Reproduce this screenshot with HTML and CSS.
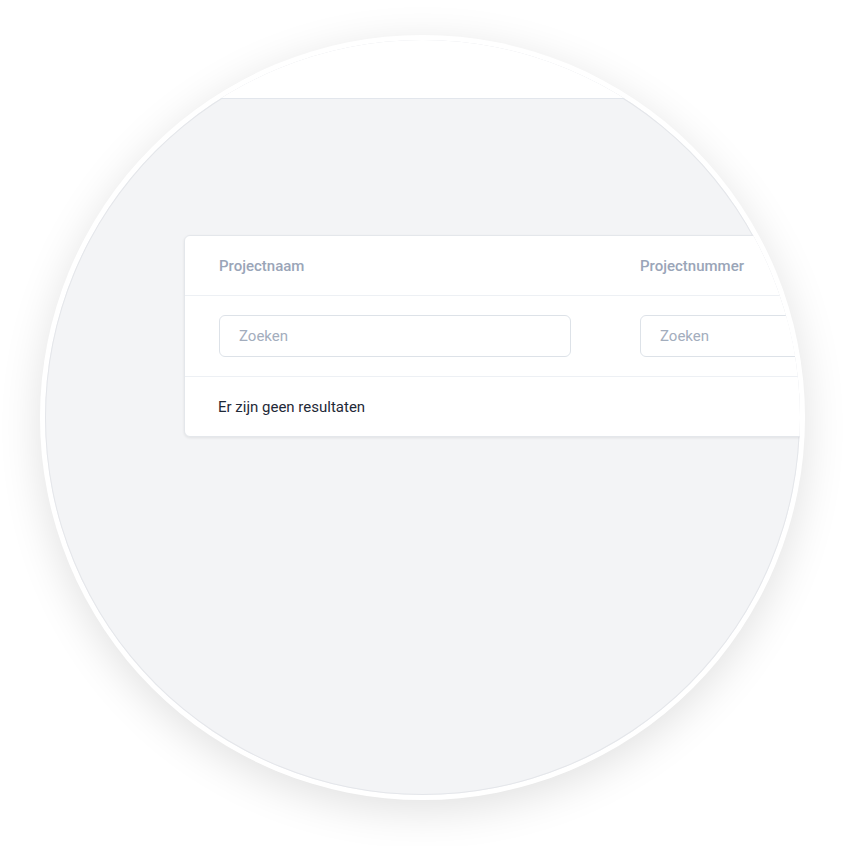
FILE: index.html
```html
<!DOCTYPE html>
<html lang="nl">
<head>
<meta charset="utf-8">
<title>Projecten</title>
<link rel="stylesheet" href="styles.css">
</head>
<body>
<div class="stage">
  <div class="lens">
    <div class="lens-inner">
      <div class="topbar"></div>
      <main class="page">
        <section class="card">
          <div class="row head">
            <div class="cell">Projectnaam</div>
            <div class="cell">Projectnummer</div>
          </div>
          <div class="row filters">
            <div class="cell"><input class="search" type="text" placeholder="Zoeken"></div>
            <div class="cell"><input class="search" type="text" placeholder="Zoeken"></div>
          </div>
          <div class="row empty">Er zijn geen resultaten</div>
        </section>
      </main>
    </div>
  </div>
</div>
</body>
</html>
```
FILE: styles.css
```css
html, body {
  margin: 0;
  padding: 0;
  background: #ffffff;
  width: 846px;
  height: 846px;
  overflow: hidden;
  font-family: Roboto, "Liberation Sans", sans-serif;
}

.stage {
  padding: 35px 0 0 40px;
}

.lens {
  width: 765px;
  height: 765px;
  box-sizing: border-box;
  border-radius: 50%;
  background: #ffffff;
  padding: 5px;
  box-shadow: 0 10px 44px rgba(0, 0, 0, 0.12);
}

.lens-inner {
  width: 100%;
  height: 100%;
  border-radius: 50%;
  overflow: hidden;
  background: #f3f4f6;
  box-shadow: inset 0 0 0 1px #e4e6ea;
}

.topbar {
  height: 58px;
  background: #ffffff;
  border-bottom: 1px solid #e2e6ec;
}

.page {
  padding: 136px 0 0 139px;
}

.card {
  width: 900px;
  background: #ffffff;
  border: 1px solid #e4e7eb;
  border-radius: 6px;
  box-shadow: 0 1px 3px rgba(0, 0, 0, 0.08);
}

.row {
  display: grid;
  grid-template-columns: 421px 421px;
  align-items: center;
  padding-left: 34px;
}

.head {
  height: 59px;
  border-bottom: 1px solid #edf0f4;
  font-size: 15px;
  font-weight: 500;
  color: #9aa5b8;
}

.filters {
  height: 80px;
  border-bottom: 1px solid #edf0f4;
}

.search {
  width: 352px;
  height: 42px;
  box-sizing: border-box;
  border: 1px solid #dde2e8;
  border-radius: 6px;
  padding: 0 19px;
  font-family: Roboto, "Liberation Sans", sans-serif;
  font-size: 15px;
  color: #2d3748;
  background: #ffffff;
  outline: none;
}

.search::placeholder {
  color: #a3adbd;
}

.empty {
  display: flex;
  height: 59px;
  padding-left: 33px;
  font-size: 15px;
  color: #1f2937;
}
```
